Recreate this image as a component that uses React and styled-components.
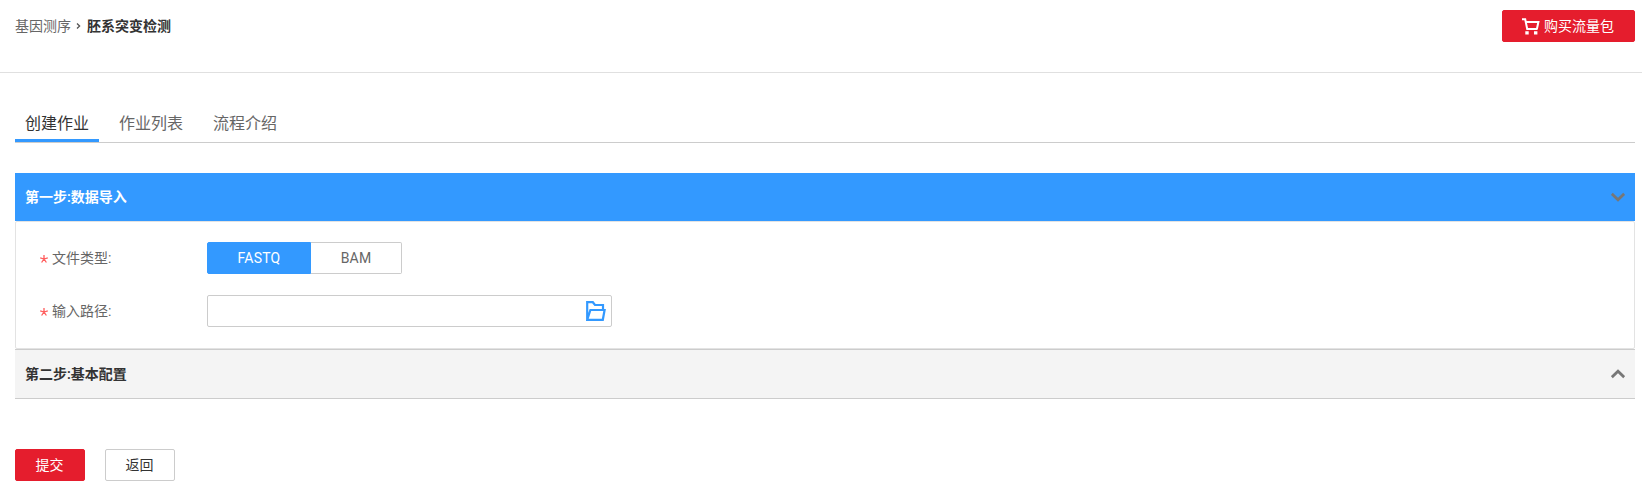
import React from "react";
import styled, { createGlobalStyle } from "styled-components";

const GlobalStyle = createGlobalStyle`
  * { box-sizing: border-box; }
  body {
    margin: 0;
    background: #fff;
    color: #666;
    font: 14px/20px Roboto, "Noto Sans CJK SC", sans-serif;
  }
  button { font: inherit; padding: 0; margin: 0; cursor: pointer; }
`;

const Page = styled.div`
  height: 493px;
  overflow: hidden;
`;

const Header = styled.header`
  display: flex;
  justify-content: space-between;
  align-items: flex-start;
  height: 73px;
  padding: 10px 7px 0 15px;
  border-bottom: 1px solid #e0e0e0;
`;

const Breadcrumb = styled.nav`
  display: flex;
  align-items: center;
  height: 32px;
`;

const Separator = styled.svg`
  margin: 0 6px 1px 5px;
`;

const Current = styled.span`
  color: #333;
  font-weight: 600;
`;

const Button = styled.button`
  display: flex;
  align-items: center;
  justify-content: center;
  width: ${({ $width }) => $width || 70}px;
  height: 32px;
  padding-right: 1px;
  border: 1px solid ${({ $primary }) => ($primary ? "#e51d2d" : "#ccc")};
  border-radius: 2px;
  background: ${({ $primary }) => ($primary ? "#e51d2d" : "#fff")};
  color: ${({ $primary }) => ($primary ? "#fff" : "#333")};
`;

const CartIcon = styled.svg`
  margin-right: 4px;
`;

const Main = styled.main`
  padding: 30px 7px 0 15px;
`;

const Tabs = styled.div`
  display: flex;
  gap: 10px;
  height: 40px;
  border-bottom: 1px solid #ccc;
`;

const Tab = styled.button`
  height: 39px;
  padding: 5px 10px 0;
  border: 0;
  border-bottom: 3px solid ${({ $active }) => ($active ? "#39f" : "transparent")};
  background: none;
  color: ${({ $active }) => ($active ? "#333" : "#666")};
  font-size: 16px;
`;

const Accordion = styled.section`
  margin-top: 30px;
`;

const StepHeader = styled.div`
  display: flex;
  align-items: center;
  justify-content: space-between;
  height: ${({ $open }) => ($open ? 48 : 50)}px;
  padding: 0 10px;
  border: solid #ccc;
  border-width: ${({ $open }) => ($open ? "0" : "1px 0")};
  background: ${({ $open }) => ($open ? "#39f" : "#f4f4f4")};
  color: ${({ $open }) => ($open ? "#fff" : "#333")};
  font-weight: 600;
`;

const StepBody = styled.div`
  display: flex;
  flex-direction: column;
  gap: 21px;
  height: 128px;
  padding: 20px 22px 0 24px;
  border: 1px solid #e3e3e3;
  border-radius: 2px;
`;

const Field = styled.div`
  display: flex;
  align-items: center;
  height: 32px;
`;

const Label = styled.label`
  display: flex;
  align-items: center;
  width: 167px;
`;

const RequiredMark = styled.svg`
  margin: 2px 4px 0 0;
`;

const Segmented = styled.div`
  display: flex;
  width: 195px;
  height: 32px;
`;

const Segment = styled.button`
  width: ${({ $active }) => ($active ? 104 : 91)}px;
  border: 1px solid ${({ $active }) => ($active ? "#39f" : "#ccc")};
  border-left-width: ${({ $active }) => ($active ? "1px" : "0")};
  border-radius: ${({ $active }) => ($active ? "2px 0 0 2px" : "0 2px 2px 0")};
  background: ${({ $active }) => ($active ? "#39f" : "#fff")};
  color: ${({ $active }) => ($active ? "#fff" : "#666")};
  letter-spacing: 0.2px;
`;

const PathBox = styled.div`
  display: flex;
  align-items: center;
  width: 405px;
  height: 32px;
  padding-right: 5px;
  border: 1px solid #ccc;
  border-radius: 2px;
`;

const PathInput = styled.input`
  flex: 1;
  min-width: 0;
  height: 28px;
  padding: 0 8px;
  border: 0;
  outline: 0;
  background: none;
  font: inherit;
`;

const Actions = styled.div`
  display: flex;
  gap: 20px;
  margin-top: 50px;
`;

function Chevron({ up }) {
  return (
    <svg width="14" height="10" viewBox="0 0 14 10" fill="none" stroke="#777" strokeWidth="2.8">
      <path d={up ? "M.8 8.2 7 2.2l6.2 6" : "M.8 1.8 7 7.8l6.2-6"} />
    </svg>
  );
}

function Required() {
  return (
    <RequiredMark width="8" height="8" viewBox="0 0 8 8" fill="none" stroke="#ff5c5c" strokeWidth="1.3">
      <path d="M4 0v4M4 4 .2 2.9M4 4l3.8-1.1M4 4 1.6 7.5M4 4l2.4 3.5" />
    </RequiredMark>
  );
}

export default function App() {
  return (
    <Page>
      <GlobalStyle />
      <Header>
        <Breadcrumb>
          <span>基因测序</span>
          <Separator width="5" height="6" viewBox="0 0 5 6" fill="none" stroke="#555" strokeWidth="1.3">
            <path d="M1 .5 3.6 3 1 5.5" />
          </Separator>
          <Current>胚系突变检测</Current>
        </Breadcrumb>
        <Button $primary $width={133}>
          <CartIcon width="18" height="17" viewBox="0 0 18 17" fill="none" stroke="#fff" strokeWidth="2">
            <path d="M0 1.2h3.2l2 9.8h10.3M3.8 4h12.6l-1.5 7" />
            <path d="M3.3 13.2h3.4v3.3H3.3zM12 13.2h3.4v3.3H12z" fill="#fff" stroke="none" />
          </CartIcon>
          购买流量包
        </Button>
      </Header>
      <Main>
        <Tabs>
          <Tab $active>创建作业</Tab>
          <Tab>作业列表</Tab>
          <Tab>流程介绍</Tab>
        </Tabs>
        <Accordion>
          <StepHeader $open>
            第一步:数据导入
            <Chevron />
          </StepHeader>
          <StepBody>
            <Field>
              <Label><Required />文件类型:</Label>
              <Segmented>
                <Segment $active>FASTQ</Segment>
                <Segment>BAM</Segment>
              </Segmented>
            </Field>
            <Field>
              <Label htmlFor="path"><Required />输入路径:</Label>
              <PathBox>
                <PathInput id="path" />
                <svg width="20" height="20" viewBox="0 0 20 20" fill="none" stroke="#39f" strokeWidth="2.2">
                  <path d="M1.2 19V1.2h5.6L9 4h8v4.5M1.2 18.8 4.4 9h14.2l-1.8 9.8z" />
                </svg>
              </PathBox>
            </Field>
          </StepBody>
          <StepHeader>
            第二步:基本配置
            <Chevron up />
          </StepHeader>
        </Accordion>
        <Actions>
          <Button $primary>提交</Button>
          <Button>返回</Button>
        </Actions>
      </Main>
    </Page>
  );
}
